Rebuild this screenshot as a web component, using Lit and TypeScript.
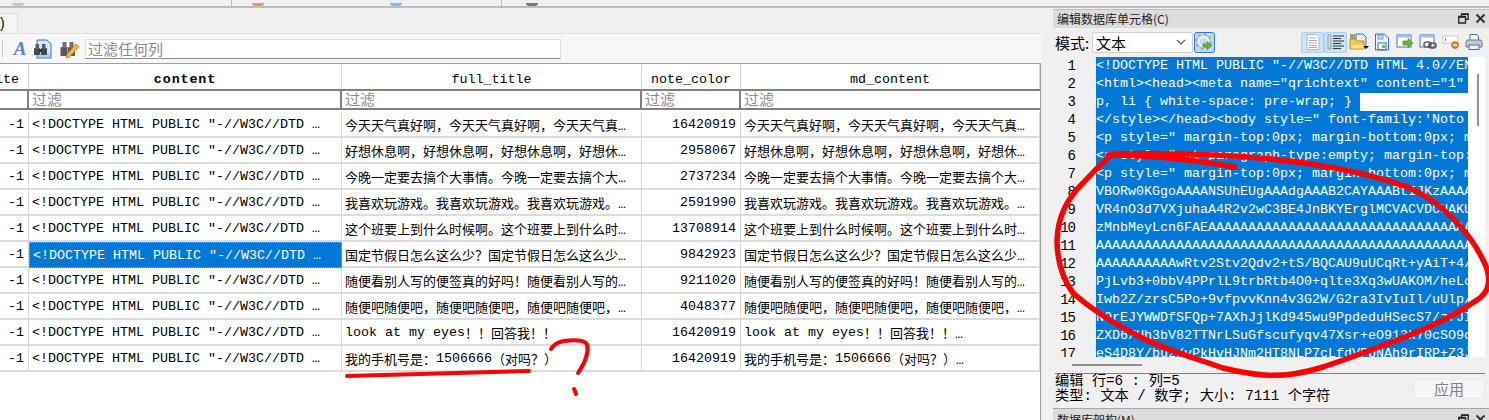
import { LitElement, html, css, svg } from "lit";
import { customElement } from "lit/decorators.js";

const DOC = '<!DOCTYPE HTML PUBLIC "-//W3C//DTD …';
const ROWS: [string, string, string, string][] = [
  ["今天天气真好啊，今天天气真好啊，今天天气真…", "16420919", "今天天气真好啊，今天天气真好啊，今天天气真…", ""],
  ["好想休息啊，好想休息啊，好想休息啊，好想休…", "2958067", "好想休息啊，好想休息啊，好想休息啊，好想休…", ""],
  ["今晚一定要去搞个大事情。今晚一定要去搞个大…", "2737234", "今晚一定要去搞个大事情。今晚一定要去搞个大…", ""],
  ["我喜欢玩游戏。我喜欢玩游戏。我喜欢玩游戏。…", "2591990", "我喜欢玩游戏。我喜欢玩游戏。我喜欢玩游戏。…", ""],
  ["这个班要上到什么时候啊。这个班要上到什么时…", "13708914", "这个班要上到什么时候啊。这个班要上到什么时…", ""],
  ["国定节假日怎么这么少？国定节假日怎么这么少…", "9842923", "国定节假日怎么这么少？国定节假日怎么这么少…", ""],
  ["随便看别人写的便签真的好吗！随便看别人写的…", "9211020", "随便看别人写的便签真的好吗！随便看别人写的…", ""],
  ["随便吧随便吧，随便吧随便吧，随便吧随便吧，…", "4048377", "随便吧随便吧，随便吧随便吧，随便吧随便吧，…", ""],
  ["look at my eyes！！回答我！！", "16420919", "look at my eyes！！回答我！！…", ""],
  ["我的手机号是：1506666（对吗？）", "16420919", "我的手机号是：1506666（对吗？）…", ""],
];

const LINES = [
  '<!DOCTYPE HTML PUBLIC "-//W3C//DTD HTML 4.0//EN" "h',
  '<html><head><meta name="qrichtext" content="1" />',
  "p, li { white-space: pre-wrap; } ",
  "</style></head><body style=\" font-family:'Noto Sans",
  '<p style=" margin-top:0px; margin-bottom:0px; margin',
  '<p style="-qt-paragraph-type:empty; margin-top:0px',
  '<p style=" margin-top:0px; margin-bottom:0px; margin',
  "VBORw0KGgoAAAANSUhEUgAAAdgAAAB2CAYAAABtIJKzAAAAAAA",
  "VR4nO3d7VXjuhaA4R2v2wC3BE4JnBKYErglMCVACVDCUAKUAAAA",
  "zMnbMeyLcn6FAEAAAAAAAAAAAAAAAAAAAAAAAAAAAAAAAAAAAA",
  "AAAAAAAAAAAAAAAAAAAAAAAAAAAAAAAAAAAAAAAAAAAAAAAAAA",
  "AAAAAAAAAAwRtv2Stv2Qdv2+tS/BQCAU9uUCqRt+yAiT+4/AAA",
  "PjLvb3+0bbV4PPrlL9trbRtb4O0+qlte3Xq3wUAKOM/heLoAAA",
  "Iwb2Z/zrsC5Po+9vfpvvKnn4v3G2W/G2ra3IvIuIl/uUlp/AAA",
  "N0rEJYWWDfSFQp+7AXhJjlKd945wu9PpdeduHSecS7/zfJIAAA",
  "ZXD6/Uh3bV82TTNrLSuGfscufyqv47Xsr+eO913k70cSO9cAAA",
  "eS4D8Y/buz/vPkHvHJNm2HT8NLP7cLfdVPbNAh9rIRP+Z3JAAA",
];

/** Split into latin and CJK runs so each uses its own cell metrics. */
const runs = (t: string) =>
  t.split(/([\x20-\x7e]+)/).filter(Boolean).map((p) =>
    /^[\x20-\x7e]+$/.test(p) ? html`<span class="lat">${p}</span>` : p
  );

const icDoc = svg`<svg width="18" height="18" viewBox="0 0 18 18"><path d="M3 1.500h9l3 3v12H3z" fill="#fff" stroke="#b4b4b4"/><path d="M5 5h7M5 7.500h8M5 10h8M5 12.500h8M5 14.500h8" stroke="#a8a8a8"/></svg>`;
const icList = svg`<svg width="18" height="18" viewBox="0 0 18 18"><rect x="1" y="2" width="3" height="14" fill="#d8d8d8" stroke="#9a9a9a"/><path d="M6 3h11M6 5.500h8M6 8h11M6 10.500h8M6 13h11M6 15.500h8" stroke="#333"/></svg>`;
const icFolder = svg`<svg width="20" height="18" viewBox="0 0 20 18"><path d="M7 1h7l3 3v9H7z" fill="#e8f0fa" stroke="#3f73c0"/><rect x="1" y="1" width="5" height="5" fill="#9c9c9c"/><path d="M1 6h6l1 2h7v8H1z" fill="#f6c94a" stroke="#b98a1e"/><path d="M2 12h13v3.500H2z" fill="#fbe48e"/><path d="M14 13h6l-3 3z" fill="#000"/></svg>`;
const icSave = svg`<svg width="16" height="18" viewBox="0 0 16 18"><path d="M1.500 1h9l4 4v12h-13z" fill="#e8f2fb" stroke="#2e6fc0"/><rect x="4" y="10" width="8" height="6.500" fill="#fff" stroke="#2e6fc0"/><rect x="8" y="12" width="3" height="3" fill="#7ab648"/><rect x="4" y="2" width="5" height="4" fill="#c5dcf2" stroke="#2e6fc0" stroke-width=".6"/></svg>`;
const icWinArrow = svg`<svg width="18" height="18" viewBox="0 0 18 18"><rect x="1" y="2" width="14" height="12" fill="#fff" stroke="#3f73c0"/><rect x="1" y="2" width="14" height="2.500" fill="#9cc0ea"/><path d="M7 8h5V5.500l5 4.500-5 4.500V12H7z" fill="#6fb13d" stroke="#4a8a24" stroke-width=".7"/></svg>`;
const icWinLink = svg`<svg width="18" height="18" viewBox="0 0 18 18"><rect x="1" y="2" width="14" height="12" fill="#fff" stroke="#3f73c0"/><rect x="1" y="2" width="14" height="2.500" fill="#9cc0ea"/><rect x="5" y="9" width="7" height="5" rx="2.500" fill="none" stroke="#666" stroke-width="1.600"/><rect x="10" y="10" width="7" height="5" rx="2.500" fill="none" stroke="#555" stroke-width="1.600"/></svg>`;
const icField = svg`<svg width="18" height="18" viewBox="0 0 18 18"><rect x="1" y="3" width="15" height="7" fill="#fff" stroke="#c8c8c8"/><path d="M3.500 5v3" stroke="#888"/><circle cx="13" cy="12" r="3.500" fill="#ef7c2a" stroke="#c85e12" stroke-width=".7"/><rect x="11" y="11.300" width="4" height="1.500" fill="#fff"/></svg>`;
const icPrint = svg`<svg width="18" height="18" viewBox="0 0 18 18"><path d="M5 1.500h7l1.500 2V8H5z" fill="#fff" stroke="#3f73c0"/><path d="M2 7h14l1 2v5H1V9z" fill="#c8c8c8" stroke="#777"/><rect x="4" y="12" width="10" height="4.500" fill="#eef4fb" stroke="#3f73c0"/></svg>`;
const icGear = svg`<svg width="19" height="19" viewBox="0 0 19 19"><circle cx="8.500" cy="8.500" r="7.300" fill="none" stroke="#a8a8a8" stroke-width="2.400" stroke-dasharray="2.800 2.930"/><circle cx="8.500" cy="8.500" r="5" fill="none" stroke="#efefef" stroke-width="3"/><circle cx="8.500" cy="8.500" r="6.500" fill="none" stroke="#a8a8a8" stroke-width=".7"/><path d="M8 11h4V8.500l5 4-5 4V14H8z" fill="#6fb13d" stroke="#4a8a24" stroke-width=".7"/></svg>`;
const icFind = svg`<svg width="20" height="20" viewBox="0 0 20 20"><path d="M4 1h10l4 4v14H4z" fill="#d6e8f8" stroke="#2e78c8"/><path d="M5 14h12v4H5z" fill="#a8d0f0"/><rect x="1" y="9" width="6" height="7" rx="1" fill="#44474d"/><rect x="8" y="9" width="6" height="7" rx="1" fill="#44474d"/><rect x="2.500" y="5" width="3.500" height="5" fill="#5a5d63"/><rect x="9" y="5" width="3.500" height="5" fill="#5a5d63"/><rect x="6" y="10" width="3" height="3" fill="#33353a"/></svg>`;
const icEdit = svg`<svg width="20" height="20" viewBox="0 0 20 20"><rect x="0.500" y="8" width="7" height="9" rx="1" fill="#55585e"/><rect x="8" y="8" width="7" height="9" rx="1" fill="#55585e"/><rect x="2.500" y="3" width="4" height="6" fill="#6a6d73"/><rect x="9.500" y="3" width="4" height="6" fill="#6a6d73"/><path d="M7 15l9-10 3 2.500-9 10-4 1.500z" fill="#f4b93c" stroke="#b47a14" stroke-width=".8"/></svg>`;
const icRestore = svg`<svg width="11" height="11" viewBox="0 0 11 11"><path d="M3.500 3V.8h6.700v5.500H8M.8 3.500h6.700V10H.8z" fill="none" stroke="#222" stroke-width="1.300"/><path d="M.8 4h6.700M3.500 1.300h6.700" stroke="#222" stroke-width="1.300"/></svg>`;
const icClose = svg`<svg width="11" height="11" viewBox="0 0 11 11"><path d="M1.500 1.500l8 8M9.500 1.500l-8 8" stroke="#333" stroke-width="2"/></svg>`;
const icChevron = svg`<svg width="10" height="6" viewBox="0 0 10 6"><path d="M1 1l4 4 4-4" fill="none" stroke="#555" stroke-width="1.100"/></svg>`;

@customElement("app-root")
export class AppRoot extends LitElement {
  static styles = css`
    :host { display: block; position: relative; width: 1489px; height: 420px; overflow: hidden; background: #f0f0f0; color: #000; font-family: "Liberation Mono", "Noto Sans CJK SC", monospace; }
    .strip { display: flex; height: 6px; border-bottom: 2px solid #bdbdbd; box-sizing: content-box; overflow: hidden; }
    .seg { position: relative; display: flex; align-items: flex-end; box-sizing: border-box; border-right: 1px solid #bdbdbd; }
    .seg1 { width: 232px; padding-left: 12px; }
    .seg2 { width: 270px; padding-left: 20px; gap: 126px; }
    .seg3 { flex: 1; border-right: 0; padding-left: 24px; }
    .frag { width: 12px; height: 3px; border-radius: 0 0 3px 3px; }
    .frag.gray { background: #c8c8c8; }
    .frag.tan { background: #d8a850; }
    .frag.blue { background: #8fb4e4; }
    .frag.dark { background: #777; }
    .main { display: flex; height: 412px; }
    .left { width: 1041px; flex: none; display: flex; flex-direction: column; }
    .tabs { height: 25px; flex: none; display: flex; align-items: flex-end; }
    .tab { width: 18px; height: 20px; background: #f5f5f5; border: 1px solid #dedede; border-left: 0; border-bottom: 0; box-sizing: border-box; font: 14px "Liberation Sans", sans-serif; line-height: 18px; overflow: hidden; }
    .toolbar { height: 30px; flex: none; background: #f7f7f7; border-top: 1px solid #e2e2e2; display: flex; align-items: center; box-sizing: border-box; }
    .sep { width: 1px; height: 18px; background: #c8c8c8; margin: 0 8px 0 2px; }
    .ita { width: 18px; font: italic bold 19px "Liberation Serif", serif; color: #4f8ad0; text-align: center; margin-right: 4px; line-height: 20px; }
    .tic { display: flex; width: 27px; }
    .tic.b { width: 25px; }
    .filterall { width: 476px; height: 20px; box-sizing: border-box; background: #fff; border: 1px solid #e0e0e0; border-bottom: 1px solid #8a8a8a; color: #8a8a8a; font: 15px/18px "Noto Sans CJK SC", sans-serif; padding-left: 2px; }
    .tablewrap { flex: 1; background: #fff; border-top: 1px solid #a0a0a0; border-right: 1px solid #a0a0a0; overflow: hidden; }
    .grid { display: grid; grid-template-columns: 29px 313px 300px 99px 299px; grid-template-rows: 25px 23px; grid-auto-rows: 26px; }
    .h { display: flex; align-items: center; justify-content: center; font-size: 13.33px; border-right: 1px solid #d8d8d8; box-sizing: border-box; overflow: hidden; white-space: pre; padding-top: 6px; }
    .h.first { justify-content: flex-end; padding-right: 9px; }
    .h.bold { font-weight: 700; letter-spacing: 0.9px; }
    .f { height: 21px; box-sizing: border-box; border-top: 2px solid #808080; border-bottom: 2px solid #808080; border-right: 2px solid #808080; color: #8a8a8a; font: 15px/16px "Noto Sans CJK SC", sans-serif; padding-left: 3px; overflow: hidden; }
    .f.last { border-right: 0; }
    .c { display: flex; align-items: center; box-sizing: border-box; border-right: 1px solid #d8d8d8; border-bottom: 2px solid #dcdcdc; font-size: 13px; white-space: pre; overflow: hidden; padding-left: 3px; }
    .lat { font-size: 13.33px; }
    .num { justify-content: flex-end; padding: 0 4px 0 0; font-size: 13.33px; }
    .sel { background: #0078d7; color: #fff; border: 1px dotted #f0a040; }
    .splitter { width: 12px; flex: none; }
    .right { flex: 1; min-width: 0; display: flex; flex-direction: column; padding-top: 1px; }
    .title { height: 19px; flex: none; background: #dcdcdc; border-top: 1px solid #bdbdbd; box-sizing: border-box; display: flex; align-items: center; padding: 0 3px 1px 4px; font: 12px "Noto Sans CJK SC", sans-serif; color: #222; }
    .title span { flex: 1; }
    .title svg { margin-right: 6px; }
    .title svg:last-child { margin-right: 0; }
    .mode { height: 28px; flex: none; display: flex; align-items: center; padding-left: 2px; }
    .lbl { font: 15px "Noto Sans CJK SC", sans-serif; width: 37px; }
    .combo { width: 101px; height: 21px; box-sizing: border-box; background: #fff; border: 1px solid #d0d0d0; border-radius: 2px; display: flex; align-items: center; justify-content: space-between; padding: 0 6px 0 3px; font: 15px "Noto Sans CJK SC", sans-serif; }
    .gear { width: 21px; height: 21px; margin-left: 1px; box-sizing: border-box; background: #bcdcf4; border: 1px solid #2e78c8; border-radius: 3px; display: flex; align-items: center; justify-content: center; }
    .icons { margin-left: auto; margin-right: 4px; display: flex; }
    .ib { width: 23px; height: 21px; display: flex; align-items: center; justify-content: center; box-sizing: border-box; }
    .ib.on { background: #c9e4fb; border: 1px solid #a5d2f7; border-radius: 2px; }
    .editor { height: 300px; flex: none; margin: 1px 4px 0 2px; display: flex; overflow: hidden; background: #fff; }
    .gutter { width: 41px; flex: none; background: #f0f0f0; }
    .ln { height: 18px; line-height: 18px; text-align: right; padding-right: 21px; font-size: 14px; letter-spacing: -1px; }
    .code { width: 372px; flex: none; font-size: 13.33px; }
    .cl { height: 18px; line-height: 18px; overflow: hidden; white-space: pre; width: fit-content; max-width: 100%; background: #0078d7; color: #fff; }
    .vbar { flex: 1; }
    .vthumb { width: 2px; height: 52px; margin: 17px 0 0 9px; background: #909090; }
    .hbar { height: 16px; flex: none; display: flex; align-items: center; padding-left: 19px; }
    .hthumb { width: 70px; height: 2px; background: #909090; }
    .status { flex: none; margin: 0 4px 0 2px; height: 31px; border-top: 1px solid #808080; display: flex; font-size: 14.2px; line-height: 15px; padding-top: 0; }
    .stext { flex: 1; white-space: pre; }
    .apply { width: 72px; height: 20px; margin: 5px 0 0; background: #f5f5f5; border: 1px solid #e8e8e8; border-radius: 3px; box-sizing: border-box; color: #808080; text-align: center; font: 15px/18px "Noto Sans CJK SC", sans-serif; }
    .gap { height: 3px; flex: none; }
    .dock { height: 20px; flex: none; background: #dcdcdc; border-top: 1px solid #a8a8a8; display: flex; align-items: flex-start; padding: 1px 3px 0 4px; font: 12px "Noto Sans CJK SC", sans-serif; color: #222; box-sizing: border-box; }
    .dock span { flex: 1; padding-top: 1px; }
    .dock svg { margin: 4px 6px 0 0; }
    .dock svg:last-child { margin-right: 0; }
    .ink { position: absolute; left: 0; top: 0; pointer-events: none; }
  `;

  render() {
    return html`
      <div class="strip">
        <div class="seg seg1"><i class="frag gray"></i></div>
        <div class="seg seg2"><i class="frag tan"></i><i class="frag blue"></i></div>
        <div class="seg seg3"><i class="frag dark"></i></div>
      </div>
      <div class="main">
        <div class="left">
          <div class="tabs"><div class="tab">)</div></div>
          <div class="toolbar">
            <div class="sep"></div>
            <div class="ita">A</div>
            <div class="tic">${icFind}</div>
            <div class="tic b">${icEdit}</div>
            <div class="filterall">过滤任何列</div>
          </div>
          <div class="tablewrap">
            <div class="grid">
              <div class="h first">ite</div>
              <div class="h bold">content</div>
              <div class="h">full_title</div>
              <div class="h">note_color</div>
              <div class="h">md_content</div>
              <div class="f"></div>
              <div class="f">过滤</div>
              <div class="f">过滤</div>
              <div class="f">过滤</div>
              <div class="f last">过滤</div>
              ${ROWS.map(
                (r, i) => html`
                  <div class="c num">-1</div>
                  <div class="c lat ${i === 5 ? "sel" : ""}">${DOC}</div>
                  <div class="c">${runs(r[0])}</div>
                  <div class="c num">${r[1]}</div>
                  <div class="c">${runs(r[2])}</div>
                `
              )}
            </div>
          </div>
        </div>
        <div class="splitter"></div>
        <div class="right">
          <div class="title"><span>编辑数据库单元格(C)</span>${icRestore}${icClose}</div>
          <div class="mode">
            <div class="lbl">模式:</div>
            <div class="combo">文本${icChevron}</div>
            <div class="gear">${icGear}</div>
            <div class="icons">
              <div class="ib on">${icDoc}</div>
              <div class="ib on">${icList}</div>
              <div class="ib">${icFolder}</div>
              <div class="ib">${icSave}</div>
              <div class="ib">${icWinArrow}</div>
              <div class="ib">${icWinLink}</div>
              <div class="ib">${icField}</div>
              <div class="ib">${icPrint}</div>
            </div>
          </div>
          <div class="editor">
            <div class="gutter">${LINES.map((_, i) => html`<div class="ln">${i + 1}</div>`)}</div>
            <div class="code">${LINES.map((l) => html`<div class="cl">${l}</div>`)}</div>
            <div class="vbar"><div class="vthumb"></div></div>
          </div>
          <div class="hbar"><div class="hthumb"></div></div>
          <div class="status">
            <div class="stext">编辑 行=6 : 列=5
类型: 文本 / 数字; 大小: 7111 个字符</div>
            <div class="apply">应用</div>
          </div>
          <div class="gap"></div>
          <div class="dock"><span>数据库架构(M)</span>${icRestore}${icClose}</div>
        </div>
      </div>
      <svg class="ink" width="1489" height="420" viewBox="0 0 1489 420" fill="none" stroke="#fe0000" stroke-linecap="round" stroke-linejoin="round">
        <path stroke-width="5.500" d="M1235 167C1195 160 1150 155 1108 155C1135 153 1200 153 1260 158C1310 162 1365 172 1407 187C1440 200 1470 232 1484 262C1492 278 1490 292 1477 300C1460 312 1440 323 1410 335C1385 345 1350 358 1323 367C1300 374 1285 376 1265 375C1250 374 1235 371 1223 368C1195 358 1165 350 1140 337C1115 324 1092 310 1073 293C1062 278 1057 258 1057 240C1058 215 1068 198 1083 183C1093 172 1100 165 1110 156"/>
        <path stroke-width="4" d="M347 376C400 374 470 373 529 371"/>
        <path stroke-width="4" d="M551 349C554 344 558 342 564 341C572 340 582 340 586 343C589 347 587 356 584 363C582 367 580 370 578 373"/>
        <path stroke-width="4" d="M574 389L576 394"/>
      </svg>
    `;
  }
}
